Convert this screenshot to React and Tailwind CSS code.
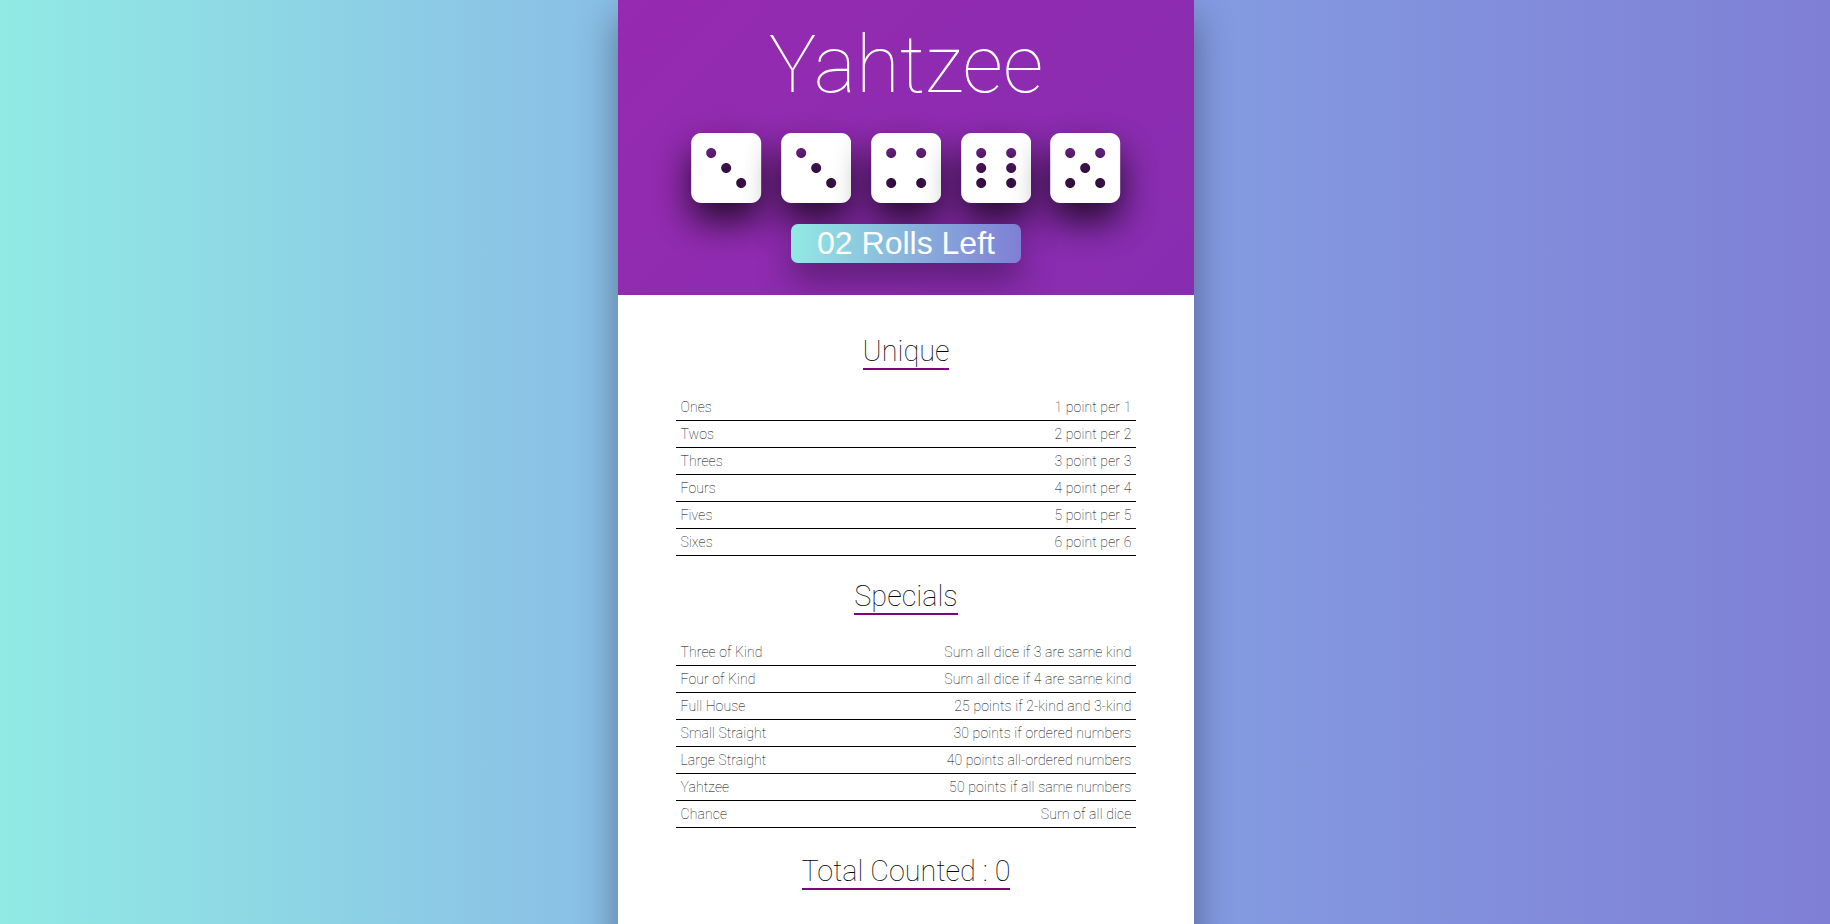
import { FaDiceThree, FaDiceFour, FaDiceFive, FaDiceSix } from "react-icons/fa";

const dice = [FaDiceThree, FaDiceThree, FaDiceFour, FaDiceSix, FaDiceFive];

const unique = [
  ["Ones", "1 point per 1"],
  ["Twos", "2 point per 2"],
  ["Threes", "3 point per 3"],
  ["Fours", "4 point per 4"],
  ["Fives", "5 point per 5"],
  ["Sixes", "6 point per 6"],
];

const specials = [
  ["Three of Kind", "Sum all dice if 3 are same kind"],
  ["Four of Kind", "Sum all dice if 4 are same kind"],
  ["Full House", "25 points if 2-kind and 3-kind"],
  ["Small Straight", "30 points if ordered numbers"],
  ["Large Straight", "40 points all-ordered numbers"],
  ["Yahtzee", "50 points if all same numbers"],
  ["Chance", "Sum of all dice"],
];

// Cast from the die shape itself, so it also shows through the pips.
function DieShadow() {
  return (
    <svg width="0" height="0" className="absolute" aria-hidden="true">
      <filter id="die-shadow" x="-100%" y="-100%" width="300%" height="300%" colorInterpolationFilters="sRGB">
        <feMorphology in="SourceAlpha" operator="dilate" radius="5" />
        <feMorphology operator="erode" radius="5" />
        <feGaussianBlur stdDeviation="18" />
        <feOffset dy="18" />
        <feComponentTransfer result="shadow">
          <feFuncA type="linear" slope="0.76" />
        </feComponentTransfer>
        <feFlood floodColor="#000" result="black" />
        <feComposite in="black" in2="shadow" operator="in" result="cast" />
        <feMerge>
          <feMergeNode in="cast" />
          <feMergeNode in="SourceGraphic" />
        </feMerge>
      </filter>
    </svg>
  );
}

function Heading({ children }) {
  return (
    <h2 className="border-b-2 border-[#800080] pt-[2px] text-[28.8px] leading-[33px] font-thin text-black">{children}</h2>
  );
}

function ScoreTable({ rows }) {
  return (
    <div className="flex w-[460px] flex-col">
      {rows.map(([name, rule]) => (
        <div key={name} className="flex h-[27px] items-center justify-between border-b border-black px-[4.5px] text-[14px] leading-4">
          <span className="tracking-[0.1px]">{name}</span>
          <span className="tracking-[0.15px]">{rule}</span>
        </div>
      ))}
    </div>
  );
}

export default function App() {
  return (
    <div className="flex h-[924px] overflow-hidden bg-linear-to-r/srgb from-[#91eae4] via-[#86a8e7] to-[#7f7fd5] pl-[618px] font-[Roboto,sans-serif] font-thin text-black">
      <DieShadow />
      <main className="flex h-[1000px] w-[576px] flex-col items-center bg-white shadow-[0_17px_36px_rgba(0,0,0,0.38)]">
        <header className="flex h-[295px] w-full flex-none flex-col items-center overflow-hidden bg-[linear-gradient(135deg,#962ab0,#872db1)]">
          <h1 className="mt-[18px] text-[80px] leading-[94px] font-thin text-white">Yahtzee</h1>
          <div className="mt-[16px] flex gap-[19.4px]">
            {dice.map((Die, i) => (
              <Die key={i} className="h-[80px] w-[70.4px] text-white [filter:url(#die-shadow)]" />
            ))}
          </div>
          <button className="relative mt-[16px] h-[39px] w-[230px] rounded-[7px] bg-linear-to-r/srgb from-[#91eae4] to-[#7f7fd5] font-['Liberation_Sans',Arial,sans-serif] text-[32px] leading-[37px] font-normal text-white shadow-[0_17px_34px_rgba(0,0,0,0.36)]">
            02 Rolls Left
          </button>
        </header>
        <div className="mt-[38px]"><Heading>Unique</Heading></div>
        <div className="mt-[24px]"><ScoreTable rows={unique} /></div>
        <div className="mt-[22px]"><Heading>Specials</Heading></div>
        <div className="mt-[24px]"><ScoreTable rows={specials} /></div>
        <div className="mt-[25px]"><Heading>Total Counted : 0</Heading></div>
      </main>
    </div>
  );
}
